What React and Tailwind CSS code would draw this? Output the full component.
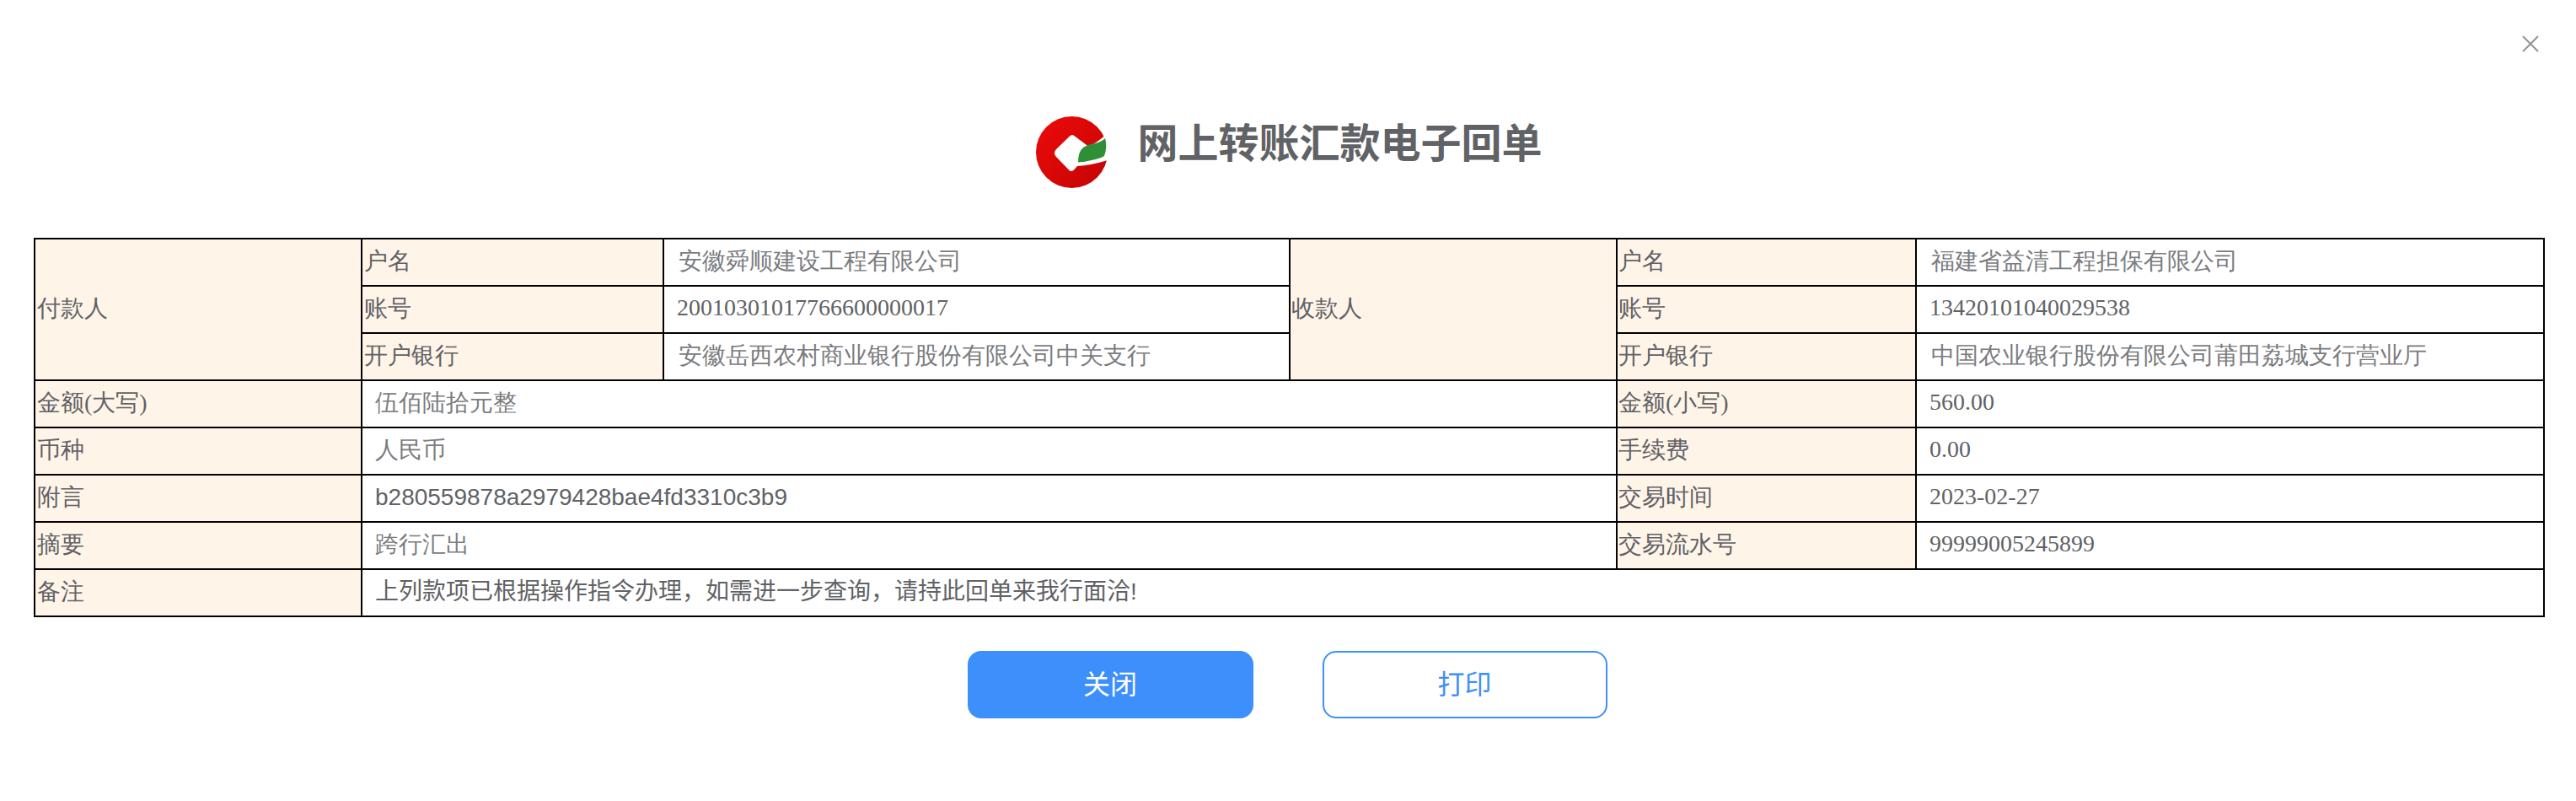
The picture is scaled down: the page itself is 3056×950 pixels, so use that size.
const serif = 'font-["Liberation_Serif",serif]';
function L({ children, rowSpan, tight }) {
  return <td rowSpan={rowSpan} className={`border-2 border-black bg-[#fff4e8] ${tight ? "pl-[1px]" : "pl-[2px]"} pb-[2px] text-[28px] text-[#606266] leading-[34px]`}>{children}</td>;
}
function V({ children, colSpan, sans, dark, top }) {
  return <td colSpan={colSpan} className={`border-2 border-black ${top ? "pl-[17px]" : "pl-[15px]"} pb-[2px] text-[28px] leading-[34px] ${dark ? "text-[#606266]" : "text-[#7a7c80]"} ${sans ? 'font-["Liberation_Sans","Noto_Sans_CJK_SC",sans-serif]' : ""}`}>{children}</td>;
}
function N({ children }) {
  return <td className="border-2 border-black pl-[15px] pb-[4px] text-[28px] leading-[34px] text-[#606266]">{children}</td>;
}
function Logo() {
  return (
    <svg viewBox="0 0 85 85" className="w-[85px] h-[85px] shrink-0">
      <defs>
        <linearGradient id="red" x1="0" y1="0" x2="1" y2="1">
          <stop offset="0" stopColor="#ee0a0a" />
          <stop offset="1" stopColor="#c40404" />
        </linearGradient>
      </defs>
      <circle cx="42.5" cy="42.5" r="42.5" fill="url(#red)" />
      <path d="M40 23.5 Q43 20.5 46 23.5 L62 35.5 Q72 32 85 20 L85 52 Q66 58 49 59 L45 63.5 Q42 66.5 39 63.5 L24 48 Q20 43.5 24 39 Z" fill="#ffffff" />
      <path d="M50 54.5 Q50 42 56 37 Q62 33 70 32 Q78 30 82 26 Q85 36 81 47 Q76 50 66 52 Q58 54 50 54.5 Z" fill="#2e8f36" />
    </svg>
  );
}
export default function App() {
  return (
    <div className={`w-[3056px] h-[950px] bg-white relative ${serif}`}>
      <svg viewBox="0 0 20 20" className="absolute left-[2992px] top-[42px] w-[20px] h-[20px]" stroke="#909399" strokeWidth="2" fill="none">
        <path d="M1 1 L19 19 M19 1 L1 19" />
      </svg>
      <div className="flex items-center justify-center h-[282px] pt-[138px] pb-[59px] pl-[3px] gap-[35px]">
        <Logo />
        <h1 className='mb-[20px] text-[48px] leading-[56px] font-bold text-[#606266] font-["Liberation_Sans","Noto_Sans_CJK_SC",sans-serif]'>网上转账汇款电子回单</h1>
      </div>
      <div className="pl-[40px]">
        <table className="border-collapse table-fixed w-[2977px]">
          <colgroup>
            <col className="w-[388px]" />
            <col className="w-[358px]" />
            <col className="w-[743px]" />
            <col className="w-[388px]" />
            <col className="w-[355px]" />
            <col className="w-[745px]" />
          </colgroup>
          <tbody>
            <tr className="h-[56px]"><L rowSpan={3}>付款人</L><L>户名</L><V top>安徽舜顺建设工程有限公司</V><L rowSpan={3} tight>收款人</L><L tight>户名</L><V top>福建省益清工程担保有限公司</V></tr>
            <tr className="h-[56px]"><L>账号</L><N>20010301017766600000017</N><L tight>账号</L><N>13420101040029538</N></tr>
            <tr className="h-[56px]"><L>开户银行</L><V top>安徽岳西农村商业银行股份有限公司中关支行</V><L tight>开户银行</L><V top>中国农业银行股份有限公司莆田荔城支行营业厅</V></tr>
            <tr className="h-[56px]"><L>金额(大写)</L><V colSpan={3}>伍佰陆拾元整</V><L tight>金额(小写)</L><N>560.00</N></tr>
            <tr className="h-[56px]"><L>币种</L><V colSpan={3}>人民币</V><L tight>手续费</L><N>0.00</N></tr>
            <tr className="h-[56px]"><L>附言</L><V colSpan={3} sans dark>b280559878a2979428bae4fd3310c3b9</V><L tight>交易时间</L><N>2023-02-27</N></tr>
            <tr className="h-[56px]"><L>摘要</L><V colSpan={3}>跨行汇出</V><L tight>交易流水号</L><N>99999005245899</N></tr>
            <tr className="h-[56px]"><L>备注</L><V colSpan={5} sans dark>上列款项已根据操作指令办理，如需进一步查询，请持此回单来我行面洽!</V></tr>
          </tbody>
        </table>
      </div>
      <div className='flex justify-center gap-[82px] mt-[40px] pr-[2px] font-["Liberation_Sans","Noto_Sans_CJK_SC",sans-serif]'>
        <button className="w-[339px] h-[80px] rounded-[16px] bg-[#3d8ffb] text-white text-[32px]">关闭</button>
        <button className="w-[338px] h-[80px] rounded-[16px] border-2 border-[#3d8ffb] bg-white text-[#3d8ffb] text-[32px]">打印</button>
      </div>
    </div>
  );
}
